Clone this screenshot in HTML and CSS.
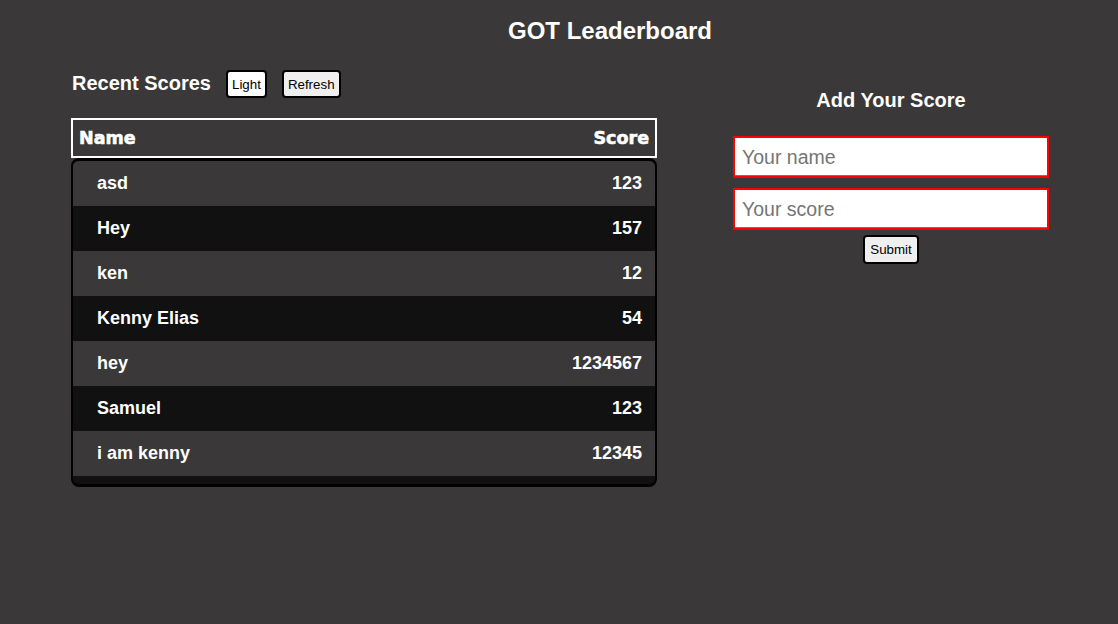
FILE: index.html
```html
<!DOCTYPE html>
<html lang="en">
<head>
<meta charset="utf-8">
<title>GOT Leaderboard</title>
<link rel="stylesheet" href="styles.css">
</head>
<body>
  <h1 class="page-title">GOT Leaderboard</h1>
  <main class="layout">
    <section class="scores">
      <div class="scores-bar">
        <h2 class="section-title">Recent Scores</h2>
        <button class="btn btn-light" type="button">Light</button>
        <button class="btn" type="button">Refresh</button>
      </div>
      <div class="table-head">
        <span>Name</span>
        <span>Score</span>
      </div>
      <div class="table-body">
        <div class="row"><span>asd</span><span>123</span></div>
        <div class="row row-dark"><span>Hey</span><span>157</span></div>
        <div class="row"><span>ken</span><span>12</span></div>
        <div class="row row-dark"><span>Kenny Elias</span><span>54</span></div>
        <div class="row"><span>hey</span><span>1234567</span></div>
        <div class="row row-dark"><span>Samuel</span><span>123</span></div>
        <div class="row"><span>i am kenny</span><span>12345</span></div>
      </div>
    </section>
    <section class="add">
      <h2 class="section-title add-title">Add Your Score</h2>
      <form class="add-form">
        <input class="field" type="text" placeholder="Your name">
        <input class="field" type="text" placeholder="Your score">
        <button class="btn btn-submit" type="button">Submit</button>
      </form>
    </section>
  </main>
</body>
</html>
```

FILE: styles.css
```css
* { box-sizing: border-box; }

body {
  margin: 0;
  background: #3a3838;
  color: #fff;
  font-family: "Liberation Sans", Arial, sans-serif;
  height: 624px;
}

.page-title {
  margin: 17px 0 0;
  padding-left: 102px;
  text-align: center;
  font-size: 24px;
  line-height: 28px;
  font-weight: bold;
}

.layout {
  display: flex;
  align-items: flex-start;
  margin-top: 25px;
  padding-left: 71px;
}

.scores {
  width: 586px;
}

.scores-bar {
  display: flex;
  align-items: center;
  gap: 15px;
  height: 28px;
  padding-left: 1px;
}

.section-title {
  margin: 0;
  font-size: 20px;
  line-height: 23px;
  font-weight: bold;
  padding-bottom: 1px;
}

.btn {
  height: 28px;
  padding: 0 4px;
  border: 2px solid #000;
  border-radius: 4px;
  background: #efefef;
  color: #000;
  font-family: "Liberation Sans", Arial, sans-serif;
  font-size: 13.33px;
}

.btn-light { background: #fff; }

.table-head {
  display: flex;
  justify-content: space-between;
  align-items: center;
  height: 40px;
  margin-top: 20px;
  padding: 0 6px;
  border: 2px solid #fff;
  font-family: "DejaVu Sans", sans-serif;
  font-weight: bold;
  font-size: 17.5px;
  -webkit-text-stroke: 0.6px #fff;
}

.table-body {
  background: #111;
  border: 2px solid #000;
  border-top-width: 3px;
  border-bottom-width: 3px;
  border-radius: 8px;
  padding-bottom: 8px;
  overflow: hidden;
}

.row {
  display: flex;
  justify-content: space-between;
  align-items: center;
  height: 45px;
  padding: 0 13px 0 24px;
  background: #3a3838;
  font-size: 18px;
  font-weight: bold;
}

.row-dark { background: #111; }

.add {
  width: 316px;
  margin-left: 76px;
  padding-top: 19px;
  text-align: center;
}

.add-form {
  display: flex;
  flex-direction: column;
  align-items: center;
  margin-top: 23px;
}

.field {
  width: 316px;
  height: 42px;
  margin: 0 0 10px;
  padding: 0 7px;
  border: 2px solid #f00;
  box-shadow: inset 0 -1px 0 #767676;
  background: #fff;
  font-family: "Liberation Sans", Arial, sans-serif;
  font-size: 19.5px;
  color: #000;
}

.field::placeholder { color: #757575; }

.btn-submit {
  margin-top: -5px;
  height: 29px;
  padding: 0 5px;
}
```
